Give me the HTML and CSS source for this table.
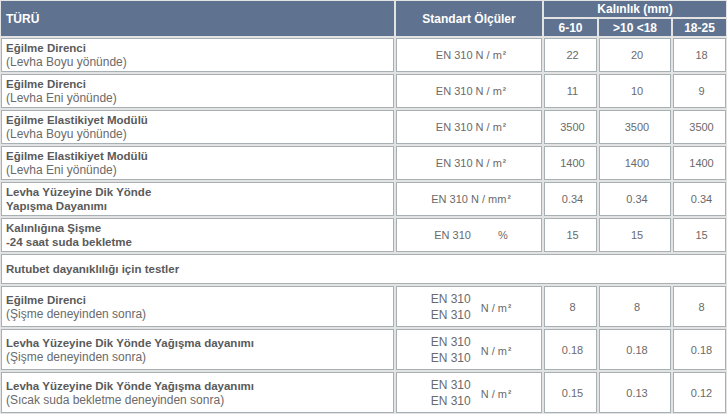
FILE: index.html
```html
<!DOCTYPE html>
<html lang="tr">
<head>
<meta charset="utf-8">
<title>Teknik Özellikler</title>
<link rel="stylesheet" href="styles.css">
</head>
<body>
<table class="spec">
  <colgroup>
    <col class="c-type">
    <col class="c-std">
    <col class="c-a">
    <col class="c-b">
    <col class="c-c">
  </colgroup>
  <thead>
    <tr class="h1">
      <th rowspan="2" class="th-type">TÜRÜ</th>
      <th rowspan="2">Standart Ölçüler</th>
      <th colspan="3">Kalınlık (mm)</th>
    </tr>
    <tr class="h2">
      <th>6-10</th>
      <th>&gt;10 &lt;18</th>
      <th>18-25</th>
    </tr>
  </thead>
  <tbody>
    <tr class="r">
      <td class="lbl"><b>Eğilme Direnci</b><br>(Levha Boyu yönünde)</td>
      <td class="std">EN 310 N / m<sup class="sq">²</sup></td>
      <td class="val">22</td><td class="val">20</td><td class="val">18</td>
    </tr>
    <tr class="r">
      <td class="lbl"><b>Eğilme Direnci</b><br>(Levha Eni yönünde)</td>
      <td class="std">EN 310 N / m<sup class="sq">²</sup></td>
      <td class="val">11</td><td class="val">10</td><td class="val">9</td>
    </tr>
    <tr class="r">
      <td class="lbl"><b>Eğilme Elastikiyet Modülü</b><br>(Levha Boyu yönünde)</td>
      <td class="std">EN 310 N / m<sup class="sq">²</sup></td>
      <td class="val">3500</td><td class="val">3500</td><td class="val">3500</td>
    </tr>
    <tr class="r">
      <td class="lbl"><b>Eğilme Elastikiyet Modülü</b><br>(Levha Eni yönünde)</td>
      <td class="std">EN 310 N / m<sup class="sq">²</sup></td>
      <td class="val">1400</td><td class="val">1400</td><td class="val">1400</td>
    </tr>
    <tr class="r">
      <td class="lbl"><b>Levha Yüzeyine Dik Yönde<br>Yapışma Dayanımı</b></td>
      <td class="std">EN 310 N / mm<sup class="sq">²</sup></td>
      <td class="val">0.34</td><td class="val">0.34</td><td class="val">0.34</td>
    </tr>
    <tr class="r">
      <td class="lbl"><b>Kalınlığına Şişme<br>-24 saat suda bekletme</b></td>
      <td class="std std-pct">EN 310<span class="pct">%</span></td>
      <td class="val">15</td><td class="val">15</td><td class="val">15</td>
    </tr>
    <tr class="sec">
      <td colspan="5" class="lbl"><b>Rutubet dayanıklılığı için testler</b></td>
    </tr>
    <tr class="r2">
      <td class="lbl"><b>Eğilme Direnci</b><br>(Şişme deneyinden sonra)</td>
      <td class="std"><div class="dual"><div class="lines">EN 310<br>EN 310</div><span class="unit">N / m<sup class="sq">²</sup></span></div></td>
      <td class="val">8</td><td class="val">8</td><td class="val">8</td>
    </tr>
    <tr class="r2">
      <td class="lbl"><b>Levha Yüzeyine Dik Yönde Yağışma dayanımı</b><br>(Şişme deneyinden sonra)</td>
      <td class="std"><div class="dual"><div class="lines">EN 310<br>EN 310</div><span class="unit">N / m<sup class="sq">²</sup></span></div></td>
      <td class="val">0.18</td><td class="val">0.18</td><td class="val">0.18</td>
    </tr>
    <tr class="r2">
      <td class="lbl"><b>Levha Yüzeyine Dik Yönde Yağışma dayanımı</b><br>(Sıcak suda bekletme deneyinden sonra)</td>
      <td class="std"><div class="dual"><div class="lines">EN 310<br>EN 310</div><span class="unit">N / m<sup class="sq">²</sup></span></div></td>
      <td class="val">0.15</td><td class="val">0.13</td><td class="val">0.12</td>
    </tr>
  </tbody>
</table>
</body>
</html>
```

FILE: styles.css
```css
html, body {
  margin: 0;
  padding: 0;
  background: #e3e3e3;
}
body {
  font-family: "Liberation Sans", Arial, sans-serif;
  overflow: hidden;
}
.spec {
  border-collapse: separate;
  border-spacing: 2px;
  margin: -1px;
  width: 729px;
  table-layout: fixed;
  background: #e3e3e3;
}
.c-type { width: 393px; }
.c-std { width: 146px; }
.c-a { width: 53px; }
.c-b { width: 72px; }
.c-c { width: 53px; }

.spec th {
  background: #5f7391;
  color: #ffffff;
  font-size: 12px;
  font-weight: bold;
  text-align: center;
  vertical-align: middle;
  padding: 0;
  line-height: 14px;
  box-sizing: border-box;
}
.spec th.th-type {
  text-align: left;
  padding-left: 5px;
}
.h1 { height: 16px; }
.h2 { height: 17px; }

.spec td {
  background: #ffffff;
  border: 1px solid #a7b0b2;
  padding: 0;
  vertical-align: middle;
  box-sizing: border-box;
  color: #6a6a6a;
}
.r { height: 34px; }
.sec { height: 30px; }
.r2 { height: 41px; }

.lbl {
  padding-left: 4px !important;
  font-size: 12px;
  line-height: 14px;
  color: #707070;
  white-space: nowrap;
}
.lbl b {
  font-size: 11.5px;
  color: #5a5a5a;
}
.std, .val {
  text-align: center;
  font-size: 11px;
  padding-left: 4px !important;
  color: #6c6c6c;
}
.sq {
  font-size: 10px;
  font-weight: bold;
  line-height: 0;
  vertical-align: 1px;
  margin-left: 1px;
}
.pct {
  margin-left: 27px;
}
.dual {
  display: flex;
  align-items: center;
  justify-content: center;
}
.lines {
  font-size: 12px;
  line-height: 16px;
  text-align: left;
}
.unit {
  margin-left: 10px;
  padding-top: 3px;
}
```
